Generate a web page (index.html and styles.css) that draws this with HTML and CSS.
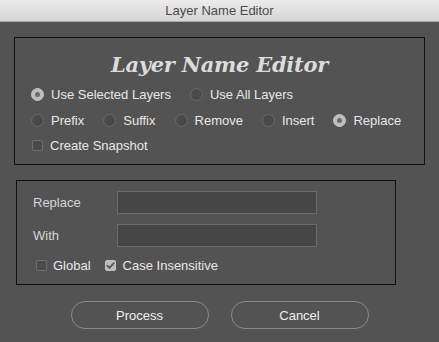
FILE: index.html
```html
<!DOCTYPE html>
<html>
  <head>
    <meta charset="utf-8" />
    <title>Layer Name Editor</title>
    <link rel="stylesheet" href="styles.css">
  </head>
  <body>
    <!-- Window title bar -->
    <div class="titlebar">Layer Name Editor</div>

    <!-- Mode options -->
    <div class="panel options">
      <h1>Layer Name Editor</h1>
      <div class="row">
        <label class="opt"><span class="radio on"></span>Use Selected Layers</label>
        <label class="opt"><span class="radio"></span>Use All Layers</label>
      </div>
      <div class="row">
        <label class="opt"><span class="radio"></span>Prefix</label>
        <label class="opt"><span class="radio"></span>Suffix</label>
        <label class="opt"><span class="radio"></span>Remove</label>
        <label class="opt"><span class="radio"></span>Insert</label>
        <label class="opt"><span class="radio on"></span>Replace</label>
      </div>
      <div class="row last">
        <label class="opt"><span class="check"></span>Create Snapshot</label>
      </div>
    </div>

    <!-- Replace fields -->
    <div class="panel fields">
      <div class="field">
        <span class="field-label">Replace</span>
        <span class="textbox"></span>
      </div>
      <div class="field">
        <span class="field-label">With</span>
        <span class="textbox"></span>
      </div>
      <div class="row checks">
        <label class="opt"><span class="check"></span>Global</label>
        <label class="opt">
          <span class="check on">
            <svg width="11" height="11" viewBox="0 0 11 11"><path d="M2.3 5.6 L4.5 7.8 L8.8 3.2" fill="none" stroke="#555" stroke-width="1.8" stroke-linecap="round" stroke-linejoin="round"/></svg>
          </span>Case Insensitive
        </label>
      </div>
    </div>

    <!-- Buttons -->
    <div class="buttons">
      <button class="btn">Process</button>
      <button class="btn">Cancel</button>
    </div>
  </body>
</html>
```

FILE: styles.css
```css
* {
  box-sizing: border-box;
  margin: 0;
  padding: 0;
}

body {
  font-family: 'Liberation Sans', Arial, sans-serif;
  font-size: 13px;
  background-color: #535353;
  color: #e8e8e8;
  width: 439px;
  height: 342px;
  overflow: hidden;
}

/* Title bar */
.titlebar {
  height: 22px;
  line-height: 21px;
  text-align: center;
  color: #4a4a4a;
  background: linear-gradient(#ececec, #d4d4d4);
  border-bottom: 1px solid #a9a9a9;
}

/* Bordered group boxes */
.panel {
  border: 1px solid #111;
}

.options {
  margin: 15px 0 0 14px;
  width: 411px;
  height: 128px;
  padding: 15px 0 0 16px;
}

.options h1 {
  font-family: 'DejaVu Serif', serif;
  font-style: italic;
  font-weight: bold;
  font-size: 21px;
  line-height: 24px;
  letter-spacing: -0.25px;
  color: #dcdcdc;
  text-align: center;
  margin: 0 16px 4px 0;
}

.row {
  display: flex;
  align-items: center;
  gap: 19px;
  height: 26px;
}

.row.last {
  height: 24px;
}

.opt {
  display: flex;
  align-items: center;
  gap: 7px;
  white-space: nowrap;
}

/* Radio buttons */
.radio {
  width: 13px;
  height: 13px;
  border-radius: 50%;
  border: 1px solid #6a6a6a;
  background-color: #4a4a4a;
  display: flex;
  align-items: center;
  justify-content: center;
}

.radio.on {
  background-color: #bdbdbd;
  border-color: #c4c4c4;
}

.radio.on::after {
  content: "";
  width: 5px;
  height: 5px;
  border-radius: 50%;
  background-color: #6b6b6b;
}

/* Check boxes */
.check {
  width: 11px;
  height: 11px;
  border: 1px solid #6e6e6e;
  border-radius: 2px;
  background-color: #4b4b4b;
  margin-left: 1px;
  display: flex;
}

.check.on {
  background-color: #bcbcbc;
  border-color: #c2c2c2;
}

.check svg {
  margin: -1px;
}

/* Replace / With fields */
.fields {
  margin: 15px 0 0 16px;
  width: 380px;
  height: 105px;
  padding: 10px 0 0 16px;
}

.field {
  display: flex;
  align-items: center;
  height: 23px;
  margin-bottom: 10px;
}

.field-label {
  width: 84px;
  color: #d6d6d6;
}

.textbox {
  width: 200px;
  height: 23px;
  background-color: #464646;
  border: 1px solid #6b6b6b;
}

.checks {
  margin-top: -2px;
  height: 20px;
  gap: 13px;
}

.checks .opt:first-child {
  margin-left: 2px;
  gap: 6px;
}

/* Bottom buttons */
.buttons {
  display: flex;
  justify-content: center;
  gap: 22px;
  margin-top: 16px;
}

.btn {
  width: 138px;
  height: 28px;
  border-radius: 14px;
  border: 1px solid #8a8a8a;
  background: transparent;
  color: #f0f0f0;
  font-family: 'Liberation Sans', Arial, sans-serif;
  font-size: 13px;
}
```
